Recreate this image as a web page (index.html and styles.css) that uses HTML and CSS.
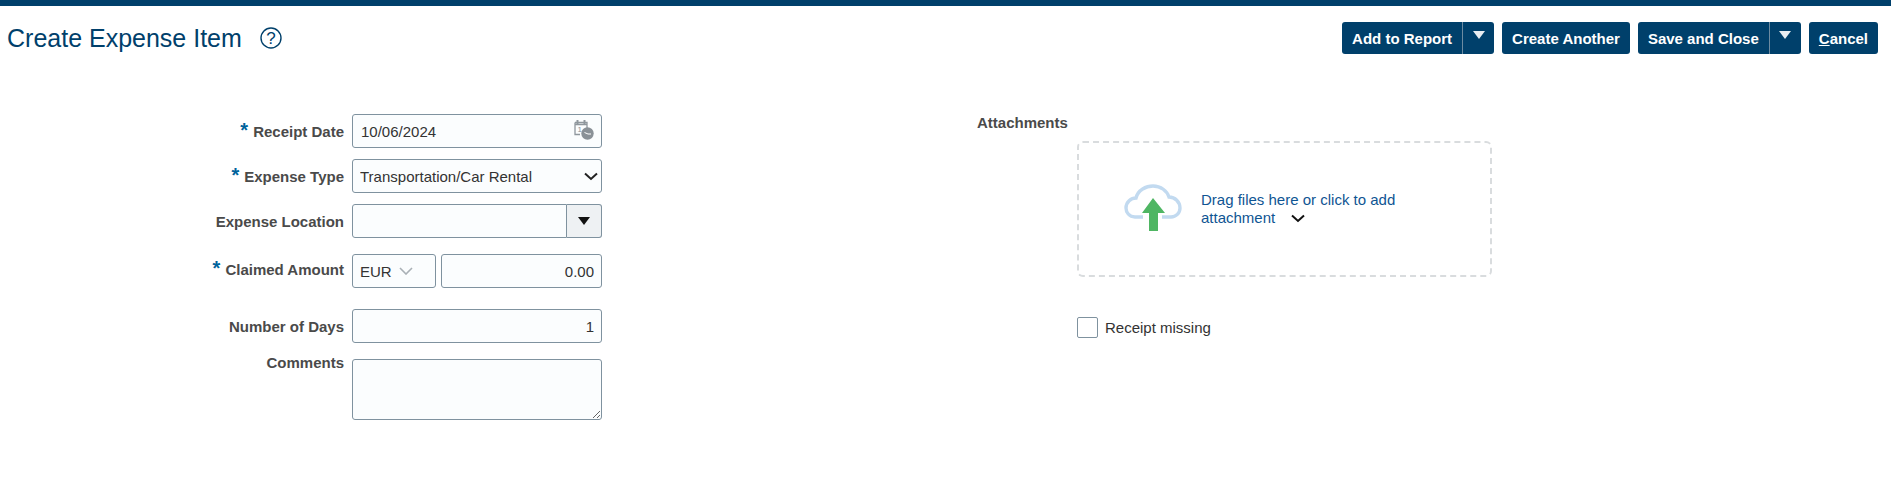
FILE: index.html
```html
<!DOCTYPE html>
<html lang="en">
	<head>
		<meta charset="UTF-8" />
		<title>Create Expense Item</title>
		<link rel="stylesheet" href="styles.css">
	</head>
	<body>
		<div class="topbar"></div>
		<div class="header">
			<div class="heading">
				<h1 class="title">Create Expense Item</h1>
				<svg class="help" width="22" height="22" viewBox="0 0 22 22">
					<circle cx="11" cy="11" r="10" fill="none" stroke="#00406b" stroke-width="1.4" />
					<text x="11" y="16.500" text-anchor="middle" class="help-mark">?</text>
				</svg>
			</div>
			<div class="actions">
				<div class="button split">
					<span class="button-text">Add to Report</span>
					<span class="button-arrow"><span class="arrow-white"></span></span>
				</div>
				<div class="button"><span class="button-text">Create Another</span></div>
				<div class="button split">
					<span class="button-text">Save and Close</span>
					<span class="button-arrow"><span class="arrow-white"></span></span>
				</div>
				<div class="button"><span class="button-text"><u>C</u>ancel</span></div>
			</div>
		</div>

		<div class="page">
			<div class="form">
				<label class="label"><span class="star">*</span>Receipt Date</label>
				<div class="field-wrap">
					<input class="field" type="text" value="10/06/2024" />
					<svg class="calendar" width="21" height="21" viewBox="0 0 21 21">
						<path d="M2 5.500 H14 M2 3.500 H14 V9 M2 3.500 V15.500 H7" fill="none" stroke="#8f979d" stroke-width="1.300" />
						<path d="M4.500 1 V5 M11.500 1 V5" stroke="#8f979d" stroke-width="2" />
						<text x="4.500" y="13" class="calendar-day">1</text>
						<circle cx="14.500" cy="14.500" r="6.200" fill="#8a9197" />
						<path d="M11.500 13.500 L15 15 H18" fill="none" stroke="#fff" stroke-width="1" />
					</svg>
				</div>

				<label class="label"><span class="star">*</span>Expense Type</label>
				<div class="field-wrap">
					<select class="field select">
						<option>Transportation/Car Rental</option>
					</select>
					<svg class="select-chevron" width="14" height="9" viewBox="0 0 14 9">
						<path d="M1 1.500 L7 7 L13 1.500" fill="none" stroke="#222" stroke-width="2" />
					</svg>
				</div>

				<label class="label">Expense Location</label>
				<div class="combo">
					<input class="field combo-input" type="text" />
					<span class="combo-button"><span class="arrow-black"></span></span>
				</div>

				<label class="label label-amount row-amount"><span class="star">*</span>Claimed Amount</label>
				<div class="amount row-amount">
					<div class="currency">
						EUR
						<svg width="14" height="8" viewBox="0 0 14 8">
							<path d="M1 1 L7 7 L13 1" fill="none" stroke="#a9b0b5" stroke-width="1.600" />
						</svg>
					</div>
					<input class="field number amount-input" type="text" value="0.00" />
				</div>

				<label class="label row-days">Number of Days</label>
				<input class="field number row-days" type="text" value="1" />

				<label class="label label-top">Comments</label>
				<textarea class="field comments"></textarea>
			</div>

			<div class="side">
				<div class="side-label">Attachments</div>
				<div class="dropzone">
					<svg class="cloud" width="58" height="48" viewBox="0 0 58 48">
						<path d="M19 33 H11 C5 33 2 28 2 24 C2 18 7 14 12 14 C14 6 22 2 29 2 C37 2 43 7 45 13 C51 13 56 18 56 24 C56 29 52 33 47 33 H38" fill="none" stroke="#c2daf0" stroke-width="3.400" />
						<path d="M29 14 L41 29 H34 V47 H25 V29 H18 Z" fill="#4fb663" />
					</svg>
					<div class="drop-text">
						Drag files here or click to add<br />
						attachment
						<svg class="drop-chevron" width="14" height="9" viewBox="0 0 14 9">
							<path d="M1 1.500 L7 7 L13 1.500" fill="none" stroke="#111" stroke-width="2" />
						</svg>
					</div>
				</div>
				<label class="missing">
					<input class="check" type="checkbox" />
					Receipt missing
				</label>
			</div>
		</div>
	</body>
</html>
```

FILE: styles.css
```css
body {
	margin: 0;
	background-color: #fff;
	font-family: "Liberation Sans", Arial, sans-serif;
	font-size: 15px;
	color: #333;
}

.topbar {
	height: 6px;
	background-color: #00406b;
}

.header {
	display: flex;
	justify-content: space-between;
	align-items: center;
	padding: 16px 13px 0 7px;
}

.heading {
	display: flex;
	align-items: center;
	gap: 18px;
}

.title {
	margin: 0;
	font-size: 25px;
	font-weight: normal;
	color: #00406b;
}

.help-mark {
	font-size: 17px;
	fill: #00406b;
}

.actions {
	display: flex;
	gap: 8px;
}

.button {
	display: flex;
	align-items: center;
	height: 32px;
	border-radius: 3px;
	background-color: #00406b;
	color: #fff;
	font-weight: bold;
	white-space: nowrap;
}

.button-text {
	padding: 0 10px;
}

.button-arrow {
	display: flex;
	align-items: center;
	justify-content: center;
	width: 32px;
	height: 100%;
	border-left: 1px solid #6d8ba1;
	box-sizing: border-box;
}

.arrow-white {
	width: 0;
	height: 0;
	margin-bottom: 6px;
	border-left: 6px solid transparent;
	border-right: 6px solid transparent;
	border-top: 8px solid #e8edf1;
}

.arrow-black {
	width: 0;
	height: 0;
	border-left: 6px solid transparent;
	border-right: 6px solid transparent;
	border-top: 8px solid #111;
}

.page {
	display: flex;
	margin-top: 60px;
}

.form {
	display: grid;
	grid-template-columns: 344px 250px;
	column-gap: 8px;
	row-gap: 11px;
	align-items: center;
}

.label {
	text-align: right;
	font-weight: bold;
	color: #4a4a4a;
}

.label-top {
	align-self: start;
}

.label-amount {
	align-self: start;
	padding-top: 7px;
}

.star {
	margin-right: 5px;
	font-size: 20px;
	line-height: 14px;
	color: #00639c;
}

.row-amount {
	margin-top: 5px;
}

.field {
	display: block;
	box-sizing: border-box;
	width: 100%;
	height: 34px;
	margin: 0;
	padding: 0 8px;
	border: 1px solid #7f929f;
	border-radius: 3px;
	background-color: #fbfdfe;
	font-family: inherit;
	font-size: 15px;
	color: #333;
}

.row-days,
.field.row-days {
	margin-top: 10px;
}

.select {
	appearance: none;
	padding: 0 7px;
}

.select-chevron {
	position: absolute;
	top: 13px;
	right: 4px;
	pointer-events: none;
}

.number {
	text-align: right;
	padding-right: 7px;
}

.field-wrap {
	position: relative;
}

.calendar {
	position: absolute;
	top: 5px;
	right: 8px;
}

.calendar-day {
	font-size: 8px;
	fill: #8a9197;
}

.combo {
	display: flex;
}

.combo-input {
	flex: 1;
	min-width: 0;
	border-radius: 3px 0 0 3px;
}

.combo-button {
	display: flex;
	align-items: center;
	justify-content: center;
	box-sizing: border-box;
	width: 35px;
	height: 34px;
	border: 1px solid #7f929f;
	border-left: 0;
	border-radius: 0 3px 3px 0;
	background-color: #eef1f3;
}

.amount {
	display: flex;
	gap: 5px;
}

.currency {
	display: flex;
	align-items: center;
	gap: 7px;
	box-sizing: border-box;
	width: 84px;
	height: 34px;
	padding: 0 7px;
	border: 1px solid #7f929f;
	border-radius: 3px;
	background-color: #fbfdfe;
}

.amount-input {
	flex: 1;
	min-width: 0;
}

.field.comments {
	height: 61px;
	margin-top: 5px;
	padding: 6px 8px;
}

.side {
	margin-left: 375px;
}

.side-label {
	height: 27px;
	box-sizing: border-box;
	font-weight: bold;
	color: #4a4a4a;
}

.dropzone {
	display: flex;
	align-items: center;
	gap: 19px;
	box-sizing: border-box;
	width: 415px;
	height: 136px;
	margin-left: 100px;
	padding-left: 45px;
	border: 2px dashed #d9dcde;
	border-radius: 6px;
}

.cloud {
	margin-bottom: 2px;
}

.drop-text {
	width: 220px;
	line-height: 18px;
	color: #0f5593;
}

.drop-chevron {
	margin-left: 12px;
}

.missing {
	display: flex;
	align-items: center;
	gap: 7px;
	margin: 40px 0 0 100px;
}

.check {
	appearance: none;
	box-sizing: border-box;
	width: 21px;
	height: 21px;
	margin: 0;
	border: 1px solid #7f929f;
	border-radius: 2px;
	background-color: #fff;
}
```
